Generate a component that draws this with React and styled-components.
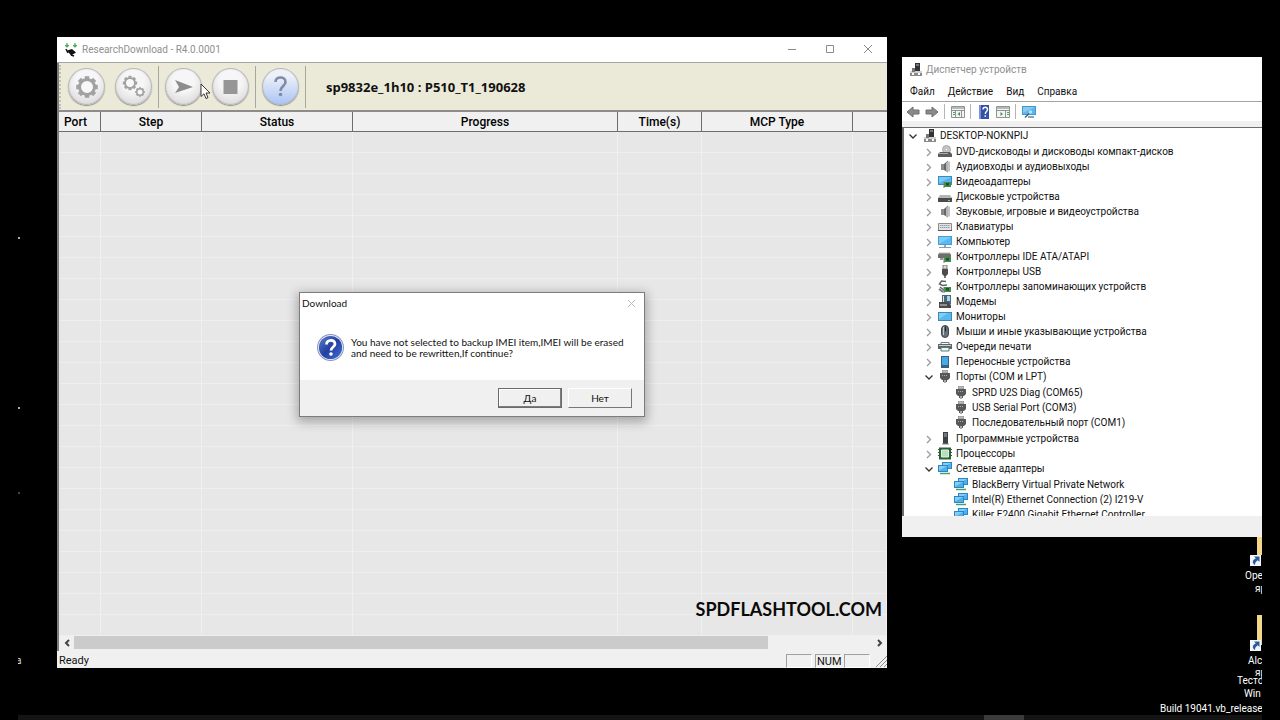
import React from 'react'
import styled, { createGlobalStyle, css } from 'styled-components'

const UI_FONT = "Roboto, 'Noto Sans', sans-serif"
const LATIN_FONT = "Lato, 'Noto Sans', sans-serif"

const COLUMNS = [
  { label: 'Port', width: 42 },
  { label: 'Step', width: 101 },
  { label: 'Status', width: 151 },
  { label: 'Progress', width: 265 },
  { label: 'Time(s)', width: 84 },
  { label: 'MCP Type', width: 151 },
  { label: '' },
]

const ROWS = Array.from({ length: 24 }, (_, i) => i)

const DEVICES = [
  { icon: 'disc', label: 'DVD-дисководы и дисководы компакт-дисков' },
  { icon: 'speaker', label: 'Аудиовходы и аудиовыходы' },
  { icon: 'display', label: 'Видеоадаптеры' },
  { icon: 'drive', label: 'Дисковые устройства' },
  { icon: 'speaker', label: 'Звуковые, игровые и видеоустройства' },
  { icon: 'keyboard', label: 'Клавиатуры' },
  { icon: 'computer', label: 'Компьютер' },
  { icon: 'ide', label: 'Контроллеры IDE ATA/ATAPI' },
  { icon: 'usb', label: 'Контроллеры USB' },
  { icon: 'storage', label: 'Контроллеры запоминающих устройств' },
  { icon: 'modem', label: 'Модемы' },
  { icon: 'monitor', label: 'Мониторы' },
  { icon: 'mouse', label: 'Мыши и иные указывающие устройства' },
  { icon: 'printer', label: 'Очереди печати' },
  { icon: 'portable', label: 'Переносные устройства' },
  {
    icon: 'port',
    label: 'Порты (COM и LPT)',
    children: [
      { icon: 'port', label: 'SPRD U2S Diag (COM65)' },
      { icon: 'port', label: 'USB Serial Port (COM3)' },
      { icon: 'port', label: 'Последовательный порт (COM1)' },
    ],
  },
  { icon: 'software', label: 'Программные устройства' },
  { icon: 'cpu', label: 'Процессоры' },
  {
    icon: 'network',
    label: 'Сетевые адаптеры',
    children: [
      { icon: 'network', label: 'BlackBerry Virtual Private Network' },
      { icon: 'network', label: 'Intel(R) Ethernet Connection (2) I219-V' },
      { icon: 'network', label: 'Killer E2400 Gigabit Ethernet Controller' },
    ],
  },
]

const App = () => (
  <>
    <GlobalStyle />
    <Screen>
      <Desktop>
        <DesktopIcons />
        <DownloadWindow />
        <DeviceManager />
        <MessageBox />
        <Pointer />
        <Taskbar>
          <TaskbarItem />
        </Taskbar>
      </Desktop>
    </Screen>
  </>
)

export default App

const DownloadWindow = () => (
  <MainFrame>
    <TitleBar>
      <ChipLogo />
      <WindowTitle>ResearchDownload - R4.0.0001</WindowTitle>
      <CaptionButton aria-label="Minimize">
        <svg width="10" height="10" viewBox="0 0 10 10">
          <path d="M1 5.5h8" />
        </svg>
      </CaptionButton>
      <CaptionButton aria-label="Maximize">
        <svg width="10" height="10" viewBox="0 0 10 10">
          <path d="M1.5 1.5h7v7h-7z" />
        </svg>
      </CaptionButton>
      <CaptionButton aria-label="Close">
        <svg width="10" height="10" viewBox="0 0 10 10">
          <path d="M1 1l8 8M9 1l-8 8" />
        </svg>
      </CaptionButton>
    </TitleBar>
    <ClientArea>
      <Toolbar>
        <Grip />
        <ToolGroup>
          <RoundButton aria-label="Load packet">
            <GearIcon cx={19} cy={19} r={9} hole={6} />
          </RoundButton>
          <RoundButton aria-label="Settings">
            <GearIcon cx={15} cy={15} r={6} hole={4} second />
          </RoundButton>
        </ToolGroup>
        <ToolGroup>
          <RoundButton aria-label="Start downloading">
            <svg width="37" height="37" viewBox="0 0 37 37">
              <path d="M10 12l18 7-18 6 4-6z" fill="#8d8d8d" />
            </svg>
          </RoundButton>
          <RoundButton aria-label="Stop downloading">
            <svg width="37" height="37" viewBox="0 0 37 37">
              <path d="M11.500 12h14v14h-14z" fill="#969696" />
            </svg>
          </RoundButton>
        </ToolGroup>
        <ToolGroup>
          <RoundButton $blue aria-label="Help">
            <svg width="37" height="37" viewBox="0 0 37 37">
              <path
                d="M13.500 14c0-6 10-6 10 0 0 4-5 4-5 9"
                fill="none"
                stroke="#7f8ba6"
                strokeWidth="2.600"
              />
              <circle cx="18.500" cy="26.500" r="1.800" fill="#7f8ba6" />
            </svg>
          </RoundButton>
        </ToolGroup>
        <PacketName>sp9832e_1h10 : P510_T1_190628</PacketName>
      </Toolbar>
      <GridArea>
        <Grid>
          <colgroup>
            {COLUMNS.map(({ label, width }) => (
              <Col key={label} $width={width} />
            ))}
          </colgroup>
          <thead>
            <tr>
              {COLUMNS.map(({ label }) => (
                <HeaderCell key={label}>{label}</HeaderCell>
              ))}
            </tr>
          </thead>
          <tbody>
            {ROWS.map(row => (
              <tr key={row}>
                {COLUMNS.map(({ label }) => (
                  <Cell key={label} />
                ))}
              </tr>
            ))}
          </tbody>
        </Grid>
        <Watermark>SPDFLASHTOOL.COM</Watermark>
      </GridArea>
      <ScrollBar>
        <ScrollButton aria-label="Scroll left">
          <svg width="6" height="8" viewBox="0 0 6 8">
            <path d="M5 1L2 4l3 3" />
          </svg>
        </ScrollButton>
        <ScrollTrack>
          <ScrollThumb />
        </ScrollTrack>
        <ScrollButton aria-label="Scroll right">
          <svg width="6" height="8" viewBox="0 0 6 8">
            <path d="M1 1l3 3-3 3" />
          </svg>
        </ScrollButton>
      </ScrollBar>
    </ClientArea>
    <StatusBar>
      <StatusText>Ready</StatusText>
      <StatusPane />
      <StatusPane>NUM</StatusPane>
      <StatusPane />
      <svg width="12" height="12" viewBox="0 0 12 12">
        <path d="M1 12L12 1M5 12l7-7M9 12l3-3" stroke="#8c8c8c" />
      </svg>
    </StatusBar>
  </MainFrame>
)

const MessageBox = () => (
  <Dialog role="dialog" aria-labelledby="dialog-title">
    <DialogTitle>
      <span id="dialog-title">Download</span>
      <DialogClose aria-label="Close">
        <svg width="9" height="9" viewBox="0 0 9 9">
          <path d="M1 1l7 7M8 1L1 8" stroke="#b9b9b9" />
        </svg>
      </DialogClose>
    </DialogTitle>
    <DialogBody>
      <QuestionIcon />
      <p>
        You have not selected to backup IMEI item,IMEI will be erased
        <br />
        and need to be rewritten,If continue?
      </p>
    </DialogBody>
    <DialogFooter>
      <DialogButton $primary>Да</DialogButton>
      <DialogButton>Нет</DialogButton>
    </DialogFooter>
  </Dialog>
)

const DeviceManager = () => (
  <ManagerFrame>
    <ManagerTitle>
      <DeviceIcon name="host" />
      Диспетчер устройств
    </ManagerTitle>
    <Menu>
      <MenuItem>Файл</MenuItem>
      <MenuItem>Действие</MenuItem>
      <MenuItem>Вид</MenuItem>
      <MenuItem>Справка</MenuItem>
    </Menu>
    <ManagerToolbar>
      <SmallTool aria-label="Back">
        <ArrowIcon />
      </SmallTool>
      <SmallTool aria-label="Forward">
        <ArrowIcon right />
      </SmallTool>
      <Divider />
      <SmallTool aria-label="Show console tree">
        <PanelIcon />
      </SmallTool>
      <Divider />
      <SmallTool aria-label="Help">
        <svg width="14" height="14" viewBox="0 0 14 14">
          <path d="M2 0h10v14H2z" fill="#3450a8" />
          <path d="M2 0h2v14H2z" fill="#7d90cf" />
          <path
            d="M6 4.500c0-3 4.500-3 4.500 0 0 2-2.200 2-2.200 4.500"
            fill="none"
            stroke="#fff"
            strokeWidth="1.400"
          />
          <path d="M7.500 10.300h1.600v1.500H7.500z" fill="#fff" />
        </svg>
      </SmallTool>
      <SmallTool aria-label="Properties">
        <PanelIcon right />
      </SmallTool>
      <Divider />
      <SmallTool aria-label="Scan for hardware changes">
        <svg width="14" height="14" viewBox="0 0 14 14">
          <path d="M0 1h14v9H0z" fill="#3a9bd6" />
          <path d="M1 2h12v7H1z" fill="#5fb5e6" />
          <path d="M1 2h12L1 8z" fill="#86caf0" />
          <path d="M6 11h6v2H6z" fill="#8ea3b0" />
          <path d="M3 12.500l4-4" stroke="#3d5f78" strokeWidth="1.500" />
          <circle cx="8.500" cy="7" r="1.700" fill="#b9e2f8" />
        </svg>
      </SmallTool>
    </ManagerToolbar>
    <TreeView>
      <TreeNode icon="host" label="DESKTOP-NOKNPIJ" level={0} open>
        <TreeList>
          {DEVICES.map(({ icon, label, children }) => (
            <TreeNode
              key={label}
              icon={icon}
              label={label}
              level={1}
              open={!!children}
            >
              {children && (
                <TreeList>
                  {children.map(child => (
                    <TreeNode key={child.label} {...child} level={2} leaf />
                  ))}
                </TreeList>
              )}
            </TreeNode>
          ))}
        </TreeList>
      </TreeNode>
    </TreeView>
  </ManagerFrame>
)

const TreeNode = ({ icon, label, level, open, leaf, children }) => (
  <li>
    <TreeRow $level={level}>
      {leaf ? (
        <Spacer />
      ) : (
        <Expander aria-label={open ? 'Collapse' : 'Expand'} $open={open}>
          <svg width="10" height="10" viewBox="0 0 10 10">
            <path d={open ? 'M1.500 3.500L5 7l3.500-3.500' : 'M3 2l3.500 3.500L3 9'} />
          </svg>
        </Expander>
      )}
      <DeviceIcon name={icon} />
      {label}
    </TreeRow>
    {children}
  </li>
)

const DesktopIcons = () => (
  <>
    <Speck $top={237} />
    <Speck $top={407} />
    <Speck $top={492} $dim />
    <LeftLabel>а</LeftLabel>
    <Folder $top={537} $height={18} />
    <ShortcutBadge $top={555} />
    <DesktopLabel $top={569} $width={17}>Ope</DesktopLabel>
    <DesktopLabel $top={582} $width={7}>яр</DesktopLabel>
    <Folder $top={615} $height={30} />
    <ShortcutBadge $top={640} />
    <DesktopLabel $top={654} $width={14}>Alc</DesktopLabel>
    <DesktopLabel $top={666} $width={7}>яр</DesktopLabel>
    <DesktopLabel $top={674} $width={25}>Тесто</DesktopLabel>
    <DesktopLabel $top={687} $width={18}>Win</DesktopLabel>
    <DesktopLabel $top={702} $width={102}>Build 19041.vb_release.1</DesktopLabel>
  </>
)

const ShortcutBadge = ({ $top }) => (
  <Badge $top={$top}>
    <svg width="11" height="11" viewBox="0 0 11 11">
      <path d="M0 0h11v11H0z" fill="#f4f6f9" />
      <path d="M4 1.500h5.500V7L7.800 5.300C6 6.500 5 8 5 10 1.500 8 2.500 5 5.800 3.300z" fill="#2d5c9e" />
    </svg>
  </Badge>
)

const Pointer = () => (
  <PointerBox>
    <svg width="11" height="17" viewBox="0 0 11 17">
      <path
        d="M1 1v12.500l3-2.700 2 4.700 2-.9-2-4.600h4z"
        fill="#fff"
        stroke="#222"
        strokeWidth=".9"
      />
    </svg>
  </PointerBox>
)

const ChipLogo = () => (
  <svg width="14" height="14" viewBox="0 0 14 14">
    <path d="M3 7.500l5-1.500 4 3.500-5 3z" fill="#111" />
    <path d="M2 6l2 4M7 12l3 1" stroke="#111" strokeWidth="1.500" />
    <path
      d="M3 0v4M1.200 2.200L3 4l1.800-1.800M11 0v4M9.200 2.200L11 4l1.800-1.800"
      fill="none"
      stroke="#3fa648"
      strokeWidth="1.200"
    />
  </svg>
)

const Gear = ({ cx, cy, r, hole, teeth = 8 }) => (
  <g transform={`translate(${cx} ${cy})`}>
    {Array.from({ length: teeth }, (_, i) => (
      <path
        key={i}
        d={`M${-r / 4} ${-r - r / 5}h${r / 2}v${r / 2}h${-r / 2}z`}
        fill="#a2a2a2"
        transform={`rotate(${(i * 360) / teeth})`}
      />
    ))}
    <circle r={hole} fill="#f8f8f8" />
    <circle
      r={(r + hole) / 2}
      fill="none"
      stroke="#a2a2a2"
      strokeWidth={r - hole}
    />
  </g>
)

const GearIcon = ({ second, ...gear }) => (
  <svg width="37" height="37" viewBox="0 0 37 37">
    <Gear {...gear} />
    {second && <Gear cx={25} cy={24} r={4} hole={2.500} />}
  </svg>
)

const QuestionIcon = () => (
  <svg width="28" height="28" viewBox="0 0 28 28">
    <defs>
      <linearGradient id="question-fill" x1="0" y1="0" x2="1" y2="1">
        <stop offset="0" stopColor="#5d7fd0" />
        <stop offset=".5" stopColor="#2340a0" />
        <stop offset="1" stopColor="#3f6fd8" />
      </linearGradient>
    </defs>
    <circle cx="13.500" cy="13.500" r="13.500" fill="#8796c4" />
    <circle cx="13.500" cy="13.500" r="12.500" fill="#e6eaf6" />
    <circle cx="13.500" cy="13.500" r="11.600" fill="url(#question-fill)" />
    <path
      d="M9.500 10.500c0-5.500 8.500-5.500 8.500-.5 0 3-4 3-4 6.500"
      fill="none"
      stroke="#fff"
      strokeWidth="2.800"
    />
    <circle cx="14" cy="20" r="1.800" fill="#fff" />
  </svg>
)

const ArrowIcon = ({ right }) => (
  <svg width="14" height="14" viewBox="0 0 14 14">
    <path
      d="M1 7l6-5v3h6v4H7v3z"
      fill="#8a8a8a"
      stroke="#6f6f6f"
      transform={right ? 'rotate(180 7 7)' : undefined}
    />
  </svg>
)

const PanelIcon = ({ right }) => (
  <svg width="14" height="14" viewBox="0 0 14 14">
    <path d="M.5 1.500h13v11H.5z" fill="#f4f5f2" stroke="#8e9494" />
    <path d="M1 2h12v2H1z" fill="#b3bcbc" />
    <path d="M1 5.500h12" stroke="#8e9494" />
    <path d={right ? 'M9.500 6v6' : 'M4.500 6v6M10.500 6v6'} stroke="#8e9494" />
    <path
      d={right ? 'M11 7.500h2M11 9.500h2' : 'M2 7.500h2M2 9.500h2'}
      stroke="#5d9a74"
    />
    <path
      d={right ? 'M4.500 7L7 9l-2.500 2z' : 'M9 7L6.500 9 9 11z'}
      fill="#4d8d63"
    />
  </svg>
)

const Card = () => (
  <>
    <path d="M6 7h7v5H6z" fill="#3f8f4b" />
    <path d="M8 8h3v2.500H8z" fill="#1f4f2a" />
    <path d="M6 7v6" stroke="#777" />
  </>
)

const Pc = ({ x, y }) => (
  <g transform={`translate(${x} ${y})`}>
    <path d="M0 0h10v7H0z" fill="#2b86c8" />
    <path d="M1 1h8v5H1z" fill="#4fb0ea" />
    <path d="M1 1h8L1 5.500z" fill="#86cdf5" />
  </g>
)

const ICONS = {
  host: (
    <>
      <path d="M7 0h5v8H7z" fill="#333" />
      <path d="M8 1h3v2H8z" fill="#777" />
      <path d="M2 8h12v5H2z" fill="#8a8a8a" />
      <path d="M2 8h12v2H2z" fill="#d0d0d0" />
      <path d="M4 5h3v4H4z" fill="#777" />
      <path d="M4 10h2v2H4zM10 10h2v2h-2z" fill="#fff" />
    </>
  ),
  disc: (
    <>
      <circle cx="8.500" cy="4.500" r="4" fill="#c6c6c6" stroke="#999" strokeWidth=".8" />
      <circle cx="8.500" cy="4.500" r="1.200" fill="#fff" stroke="#999" strokeWidth=".6" />
      <path d="M2 7h10l2 2v3H0V9z" fill="#5c5c5c" />
      <path d="M1 8.500h9" stroke="#a9a9a9" />
    </>
  ),
  speaker: (
    <>
      <path d="M3 4h3v6H3z" fill="#8c8c8c" />
      <path d="M6 4l4-3.500v12L6 10z" fill="#676767" />
      <path d="M8 3l2-2v11.500L8 11z" fill="#b5b5b5" />
      <path d="M11 1.500v10" stroke="#8a8a8a" />
    </>
  ),
  display: (
    <>
      <path d="M0 1h14v9H0z" fill="#2f8fce" />
      <path d="M1 2h12v7H1z" fill="#58b3e8" />
      <path d="M1 2h12L1 8z" fill="#80c8f0" />
      <Card />
    </>
  ),
  drive: (
    <>
      <path d="M2 5h10l2 3H0z" fill="#b5b5b5" />
      <path d="M0 8h14v4H0z" fill="#4b4b4b" />
      <path d="M10 10.500h2" stroke="#7dd18b" />
    </>
  ),
  keyboard: (
    <>
      <path d="M.5 3.500h13v7H.5z" fill="#e3e3e3" stroke="#8b8b8b" />
      <path d="M2 5.500h10M2 7.500h10" stroke="#909cab" strokeDasharray="1.500 .5" />
      <path d="M0 10.500h14" stroke="#555" />
    </>
  ),
  computer: (
    <>
      <path d="M0 1h14v9H0z" fill="#3d9fe0" />
      <path d="M1 2h12v7H1z" fill="#5ab8f0" />
      <path d="M1 2h12L1 9z" fill="#80cbf6" />
      <path d="M6 10h2v2H6z" fill="#9aa7b0" />
      <path d="M1 12.500h12" stroke="#8f9aa2" />
    </>
  ),
  ide: (
    <>
      <path d="M1 3h11l1 2v3H0V5z" fill="#6d6d6d" />
      <path d="M1 3h11" stroke="#b9b9b9" />
      <path d="M2 8h3v2H2z" fill="#999" />
      <Card />
    </>
  ),
  usb: (
    <>
      <path d="M5 0h4v4H5z" fill="#d7d7d7" stroke="#666" strokeWidth=".8" />
      <path d="M4 4h6v5l-2 2H6L4 9z" fill="#4d4d4d" />
      <path d="M7 10v3.500" stroke="#4d4d4d" strokeWidth="1.500" />
    </>
  ),
  storage: (
    <>
      <path
        d="M8 1.500L3.500 1 1.500 4l3 1.500L9 5M2 7l5 4"
        fill="none"
        stroke="#5f6663"
        strokeWidth="1.500"
      />
      <path d="M1 9l4 3" stroke="#777" strokeWidth="2" />
      <Card />
    </>
  ),
  modem: (
    <>
      <path d="M4 0h9v9H4z" fill="#4a6a7c" />
      <path d="M9 1h3v5H9z" fill="#a8d5ea" />
      <path d="M5 1h1v6H5z" fill="#e6e6e6" />
      <path d="M1 7h9l3 3v3H1z" fill="#4b4b4b" />
      <path d="M2 10h7" stroke="#d5d5d5" />
    </>
  ),
  monitor: (
    <>
      <path d="M0 2h14v9H0z" fill="#3a87b8" />
      <path d="M1 3h12v7H1z" fill="#5ab9ec" />
      <path d="M1 3h9l-9 6z" fill="#7fd0f7" />
    </>
  ),
  mouse: (
    <>
      <rect x="3.500" y=".5" width="7" height="12" rx="3.500" fill="#66727b" stroke="#3e474e" />
      <path d="M5.500 2v8" stroke="#c1cbd1" />
      <path d="M7.500 1.500v5" stroke="#222" />
    </>
  ),
  printer: (
    <>
      <path d="M3 2.500h8V5H3z" fill="#fff" stroke="#777" />
      <path d="M0 4h14v5H0z" fill="#5c6669" />
      <path d="M1 5.500h12" stroke="#c8d0d2" />
      <path d="M3 7.500h8V11H3z" fill="#eef5f4" stroke="#54807c" />
    </>
  ),
  portable: (
    <>
      <path d="M3 1h8v12H3z" fill="#3c5f7c" />
      <path d="M4 2h6v8H4z" fill="#46a9e8" />
    </>
  ),
  port: (
    <>
      <path d="M4.500 0h5v3h-5z" fill="#bbb" stroke="#777" strokeWidth=".6" />
      <path d="M2 3h10v5l-2 2H4L2 8z" fill="#585858" />
      <path d="M4 5.500h6" stroke="#aaa" strokeDasharray="1 1" />
      <path d="M5.500 10v2M8.500 10v2M7 10v3" stroke="#555" />
    </>
  ),
  software: (
    <>
      <path d="M5 0h5v12H5z" fill="#3b4045" />
      <path d="M6 2h3M6 4h3" stroke="#aab0b5" />
      <path d="M4 12h7" stroke="#888" />
    </>
  ),
  cpu: (
    <>
      <path d="M1 .5h12v12H1z" fill="#2f5f3a" />
      <path d="M3.500 3h7v7h-7z" fill="#b8dfbb" stroke="#e2f2e2" />
      <path
        d="M0 2.500h1M0 5.500h1M0 8.500h1M13 2.500h1M13 5.500h1M13 8.500h1"
        stroke="#2f5f3a"
      />
    </>
  ),
  network: (
    <>
      <Pc x={4} y={0} />
      <Pc x={0} y={3} />
      <path d="M2 11.500h10" stroke="#46a06c" strokeWidth="1.500" />
    </>
  ),
}

const DeviceIcon = ({ name }) => (
  <svg width="14" height="13" viewBox="0 0 14 13">
    {ICONS[name]}
  </svg>
)

const GlobalStyle = createGlobalStyle`
  * {
    box-sizing: border-box;
  }

  body {
    margin: 0;
    background: #000;
    font-family: ${UI_FONT};
    font-size: 10px;
    color: #111;
  }

  button {
    padding: 0;
    border: 0;
    background: none;
    font: inherit;
    color: inherit;
  }

  svg {
    display: block;
    flex: none;
  }
`

const Screen = styled.div`
  min-height: 100vh;
  display: flex;
  padding: 0 18px;
  background: #000;
`

const Desktop = styled.main`
  position: relative;
  flex: 1;
  overflow: hidden;
`

const MainFrame = styled.section`
  position: absolute;
  top: 37px;
  right: 375px;
  bottom: 52px;
  left: 39px;
  display: flex;
  flex-direction: column;
  background: #f0f0f0;
`

const TitleBar = styled.header`
  display: flex;
  align-items: center;
  height: 26px;
  padding-left: 7px;
  background: #fff;
  border-bottom: 1px solid #a5a5a5;
  color: #8f8f8f;
`

const WindowTitle = styled.h1`
  flex: 1;
  margin: 0 0 0 4px;
  font-size: 10px;
  font-weight: 400;
`

const CaptionButton = styled.button`
  display: flex;
  align-self: flex-start;
  align-items: center;
  justify-content: center;
  width: 38px;
  height: 24px;

  path {
    fill: none;
    stroke: #8a8a8a;
  }
`

const ClientArea = styled.div`
  flex: 1;
  min-height: 0;
  display: flex;
  flex-direction: column;
  border-left: 2px solid #7d7d7d;
`

const Toolbar = styled.div`
  display: flex;
  align-items: center;
  height: 49px;
  background: #ebe9d7;
  border-bottom: 2px solid #8c8c8c;
`

const Grip = styled.div`
  width: 3px;
  height: 44px;
  border-left: 2px dotted #c3c1b2;
`

const ToolGroup = styled.div`
  display: flex;
  align-items: center;
  gap: 10px;
  height: 42px;
  padding: 0 6px;
  border-right: 1px solid #a9a797;
`

const RoundButton = styled.button`
  width: 37px;
  height: 37px;
  border-radius: 50%;
  background: radial-gradient(circle at 50% 35%, #f6f6f6 35%, #d4d4d4 90%);
  box-shadow: inset 0 0 1px 1px #b3b3b3, 0 1px 1px #8e8e8e;

  ${({ $blue }) =>
    $blue &&
    css`
      background: linear-gradient(#eef1f8 20%, #a9c3f4);
    `}
`

const PacketName = styled.strong`
  margin-left: 20px;
  font: 700 13px/18px 'Open Sans', 'Noto Sans', sans-serif;
`

const GridArea = styled.div`
  position: relative;
  flex: 1;
  min-height: 0;
  overflow: hidden;
  background: #e7e7e7;
`

const Watermark = styled.div`
  position: absolute;
  right: 5px;
  bottom: 16px;
  font: 700 18px/22px Lato, sans-serif;
  color: #0a0a0a;
`

const Grid = styled.table`
  width: 100%;
  table-layout: fixed;
  border-collapse: separate;
  border-spacing: 0;
`

const Col = styled.col`
  width: ${({ $width }) => ($width ? `${$width}px` : 'auto')};
`

const HeaderCell = styled.th`
  height: 20px;
  padding: 0;
  background: #f0f0f0;
  border-right: 1px solid #6d6d6d;
  border-bottom: 1px solid #6d6d6d;
  font: 500 12px/18px Roboto, sans-serif;
  color: #000;

  &:first-child {
    padding-left: 5px;
    text-align: left;
  }

  &:last-child {
    border-right: 0;
  }
`

const Cell = styled.td`
  height: 21px;
  padding: 0;
  border-right: 1px solid #f0f0f0;
  border-bottom: 1px solid #eee;
`

const ScrollBar = styled.div`
  display: flex;
  height: 15px;
  padding-bottom: 2px;
  background: #f0f0f0;
`

const ScrollButton = styled.button`
  display: flex;
  align-items: center;
  justify-content: center;
  width: 15px;

  path {
    fill: none;
    stroke: #444;
    stroke-width: 2;
  }
`

const ScrollTrack = styled.div`
  flex: 1;
`

const ScrollThumb = styled.div`
  width: 87%;
  height: 100%;
  background: #cbcbcb;
`

const StatusBar = styled.footer`
  display: flex;
  align-items: center;
  gap: 3px;
  height: 17px;
  padding: 2px 0 0 2px;
  font: 11px/14px Roboto, sans-serif;
`

const StatusText = styled.span`
  flex: 1;
`

const StatusPane = styled.span`
  width: 26px;
  height: 14px;
  padding-left: 1px;
  border: 1px solid;
  border-color: #a0a0a0 #fff #fff #a0a0a0;
  line-height: 13px;

  &:last-of-type {
    margin-right: 2px;
  }
`

const Dialog = styled.section`
  position: absolute;
  top: 292px;
  left: 281px;
  width: 346px;
  background: #fff;
  border: 1px solid #7c7c7c;
  box-shadow: 0 3px 10px 2px rgba(0, 0, 0, 0.28);
  font-family: ${LATIN_FONT};
`

const DialogTitle = styled.header`
  display: flex;
  align-items: center;
  justify-content: space-between;
  height: 20px;
  padding: 0 8px 0 2px;
`

const DialogClose = styled.button`
  padding: 0;
`

const DialogBody = styled.div`
  display: flex;
  align-items: center;
  gap: 6px;
  height: 67px;
  padding: 2px 17px 0;

  p {
    margin: 0;
    line-height: 11px;
    white-space: nowrap;
  }
`

const DialogFooter = styled.footer`
  display: flex;
  align-items: center;
  justify-content: flex-end;
  gap: 6px;
  height: 36px;
  padding-right: 12px;
  background: #f0f0f0;
`

const DialogButton = styled.button`
  width: 64px;
  height: 20px;
  background: #f0f0f0;
  border: 1px solid;
  border-color: #fff #777 #777 #fff;

  ${({ $primary }) =>
    $primary &&
    css`
      border-color: #6b6b6b;
      box-shadow: inset -1px -1px 0 #7c7c7c, inset 1px 1px 0 #fff;
    `}
`

const ManagerFrame = styled.section`
  position: absolute;
  top: 57px;
  right: 0;
  bottom: 183px;
  width: 360px;
  display: flex;
  flex-direction: column;
  padding-bottom: 21px;
  background: #f0f0f0;
`

const ManagerTitle = styled.header`
  display: flex;
  align-items: center;
  gap: 4px;
  height: 25px;
  padding-left: 6px;
  background: #fff;
  color: #8f8f8f;
`

const Menu = styled.nav`
  display: flex;
  align-items: center;
  gap: 13px;
  height: 20px;
  padding-left: 8px;
  background: #fff;
  border-bottom: 1px solid #a5a5a5;
`

const MenuItem = styled.button`
  line-height: 18px;
`

const ManagerToolbar = styled.div`
  display: flex;
  align-items: center;
  gap: 5px;
  height: 19px;
  padding-left: 4px;
  background: #fff;
`

const SmallTool = styled.button`
  width: 14px;
  height: 14px;
`

const Divider = styled.div`
  width: 1px;
  height: 15px;
  margin-right: 1px;
  background: #b5b5b5;
`

const TreeView = styled.ul`
  flex: 1;
  min-height: 0;
  margin: 6px 0 0;
  padding: 0;
  overflow: hidden;
  list-style: none;
  background: #fff;
  border-top: 1px solid #6d6d6d;
  border-left: 2px solid #6d6d6d;
`

const TreeList = styled.ul`
  margin: 1px 0;
  padding: 0;
  list-style: none;
`

const TreeRow = styled.div`
  display: flex;
  align-items: center;
  gap: 4px;
  height: 15px;
  padding-left: ${({ $level }) => 4 + $level * 16}px;
  white-space: nowrap;
`

const Expander = styled.button`
  width: 10px;
  height: 10px;

  path {
    fill: none;
    stroke: ${({ $open }) => ($open ? '#333' : '#999')};
    stroke-width: 1.3;
  }
`

const Spacer = styled.span`
  width: 10px;
`

const Speck = styled.i`
  position: absolute;
  top: ${({ $top }) => $top}px;
  left: 0;
  width: 2px;
  height: 2px;
  background: ${({ $dim }) => ($dim ? '#444' : '#aaa')};
`

const LeftLabel = styled.span`
  position: absolute;
  top: 654px;
  left: -2px;
  line-height: 14px;
  color: #ddd;
`

const Folder = styled.i`
  position: absolute;
  top: ${({ $top }) => $top}px;
  right: 0;
  width: 5px;
  height: ${({ $height }) => $height}px;
  background: #f3d88b;
`

const Badge = styled.span`
  position: absolute;
  top: ${({ $top }) => $top}px;
  right: 1px;
`

const DesktopLabel = styled.span`
  position: absolute;
  top: ${({ $top }) => $top}px;
  right: 0;
  width: ${({ $width }) => $width}px;
  overflow: hidden;
  line-height: 14px;
  white-space: nowrap;
  color: #fff;
`

const PointerBox = styled.div`
  position: absolute;
  top: 83px;
  left: 182px;
`

const Taskbar = styled.div`
  position: absolute;
  right: 0;
  bottom: 0;
  left: 0;
  height: 5px;
  background: #141414;
`

const TaskbarItem = styled.div`
  width: 40px;
  height: 5px;
  margin-left: 966px;
  background: #3a3a3a;
`
